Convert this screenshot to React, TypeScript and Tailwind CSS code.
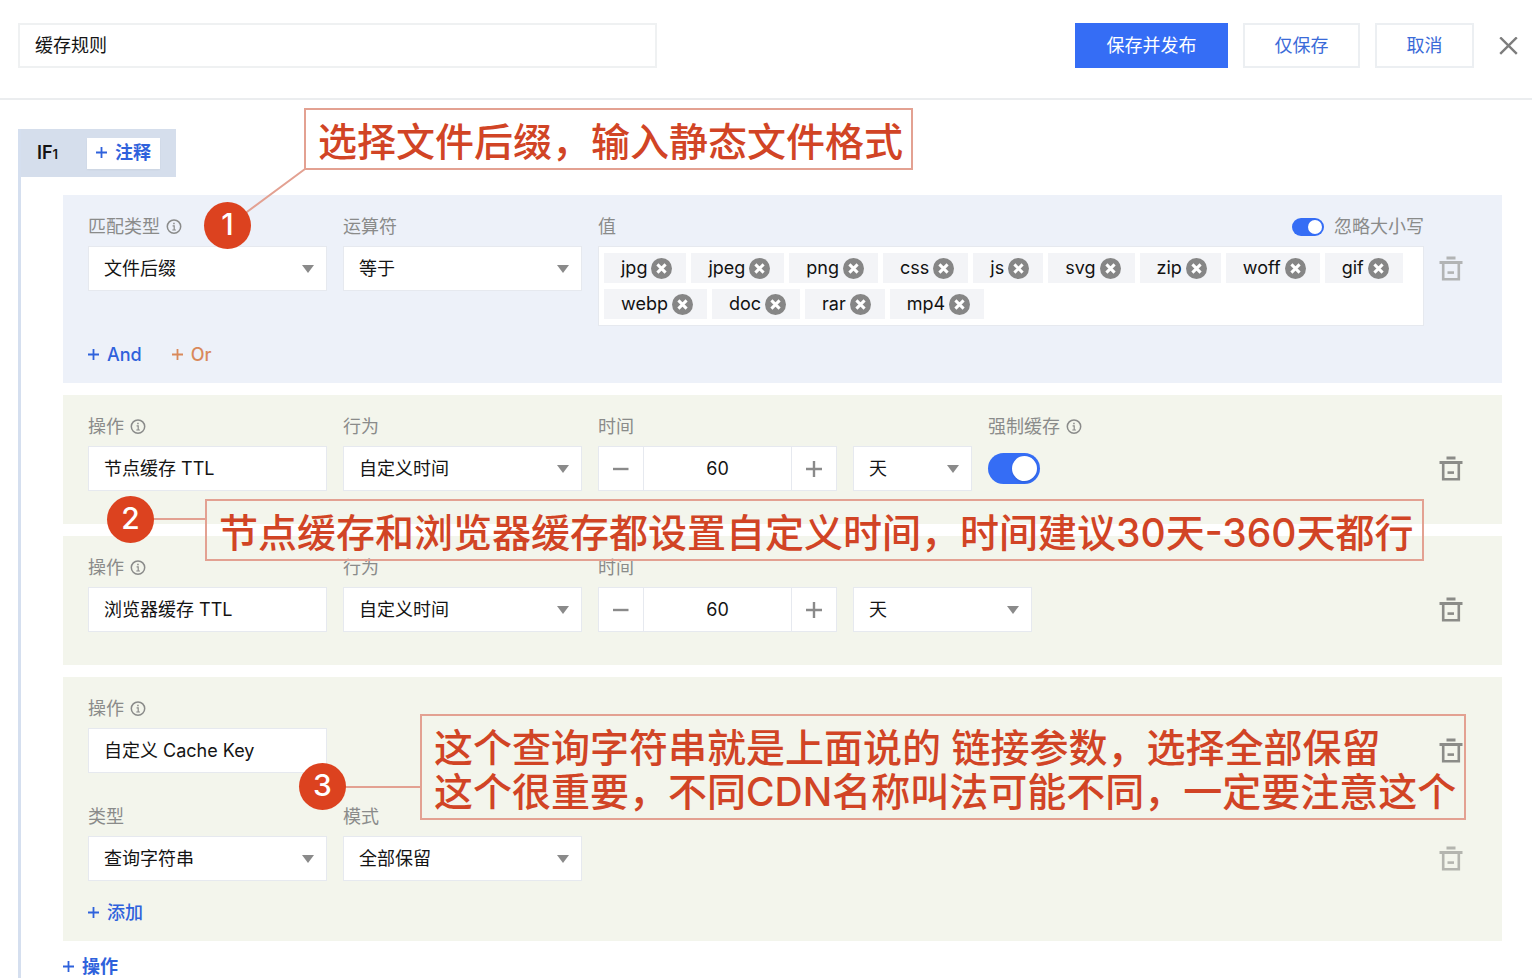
import React, { useId, useState } from "react";

const fieldBase =
  "h-[45px] w-full appearance-none rounded-none border border-[#e6e9ef] bg-white px-[15px] text-lg text-[#141414] outline-none";

function PlusIcon() {
  return (
    <svg width="12" height="12" viewBox="0 0 12 12" fill="none" stroke="currentColor" strokeWidth="1.8" aria-hidden="true">
      <path d="M5.5 0v11M0 5.5h11" />
    </svg>
  );
}

function InfoIcon() {
  return (
    <svg width="16" height="16" viewBox="0 0 16 16" fill="none" stroke="currentColor" strokeWidth="1.5" aria-hidden="true">
      <circle cx="8" cy="7.6" r="6.7" />
      <path d="M6.6 6.9H8.2V10.9M6.3 11h3.6" strokeWidth="1.2" />
      <path d="M7.2 4.5h1.5" strokeWidth="1.6" />
    </svg>
  );
}

function TrashIcon() {
  return (
    <svg width="24" height="25" viewBox="0 0 24 25" className="shrink-0" aria-hidden="true">
      <g fill="#8b8c88">
        <rect x="7.5" y="0.5" width="9" height="3" />
        <rect x="0.5" y="5" width="23" height="3" />
        <rect x="8.5" y="15.3" width="6.5" height="2.6" />
      </g>
      <path d="M4.2 7v16.2h15.6V7" fill="none" stroke="#8b8c88" strokeWidth="2.6" />
    </svg>
  );
}

function DeleteButton({ dim = false }: { dim?: boolean }) {
  return (
    <button
      type="button"
      aria-label="删除"
      className={`ml-auto flex h-[45px] w-[22px] shrink-0 items-center justify-center ${dim ? "opacity-60" : ""}`}
    >
      <TrashIcon />
    </button>
  );
}

function Label({ text, info, htmlFor }: { text: string; info?: boolean; htmlFor?: string }) {
  return (
    <div className="mb-[3px] flex h-8 items-center gap-1.5 text-[#8a8b8a]">
      <label htmlFor={htmlFor}>{text}</label>
      {info && <InfoIcon />}
    </div>
  );
}

function SelectBox({ id, value, label }: { id?: string; value: string; label?: string }) {
  return (
    <div className="relative">
      <select id={id} aria-label={label} className={fieldBase} defaultValue={value}>
        <option>{value}</option>
      </select>
      <svg width="12" height="8" viewBox="0 0 12 8" className="pointer-events-none absolute top-[19px] right-[13px]" aria-hidden="true">
        <path d="M0 0h12L6 8z" fill="#8a8a8a" />
      </svg>
    </div>
  );
}

function SelectField({ label, value, info }: { label: string; value: string; info?: boolean }) {
  const id = useId();
  return (
    <div className="w-[239px]">
      <Label text={label} info={info} htmlFor={id} />
      <SelectBox id={id} value={value} />
    </div>
  );
}

function TextField({ label, value }: { label: string; value: string }) {
  const id = useId();
  return (
    <div className="w-[239px]">
      <Label text={label} info htmlFor={id} />
      <input id={id} type="text" defaultValue={value} className={`${fieldBase} pb-[3px]`} />
    </div>
  );
}

function NumberField({ label, initial }: { label: string; initial: number }) {
  const id = useId();
  const [value, setValue] = useState(initial);
  return (
    <div className="w-[239px]">
      <Label text={label} htmlFor={id} />
      <div className="flex h-[45px] border border-[#e6e9ef] bg-white text-[#8a8a8a]">
        <button type="button" aria-label="减少" onClick={() => setValue(value - 1)} className="flex w-11 items-center justify-center">
          <svg width="16" height="16" viewBox="0 0 16 16" stroke="currentColor" strokeWidth="2.4" aria-hidden="true">
            <path d="M0 8h15.5" />
          </svg>
        </button>
        <input
          id={id}
          type="text"
          inputMode="numeric"
          value={value}
          onChange={(e) => setValue(Number(e.target.value) || 0)}
          className="min-w-0 flex-1 border-x border-[#e6e9ef] text-center text-lg text-[#141414] outline-none"
        />
        <button type="button" aria-label="增加" onClick={() => setValue(value + 1)} className="flex w-11 items-center justify-center">
          <svg width="16" height="16" viewBox="0 0 16 16" stroke="currentColor" strokeWidth="2.4" aria-hidden="true">
            <path d="M0 8h16M8 0v16" />
          </svg>
        </button>
      </div>
    </div>
  );
}

function LinkButton({ text, orange = false, strong = false }: { text: string; orange?: boolean; strong?: boolean }) {
  return (
    <button
      type="button"
      className={`flex h-6 items-center gap-[7px] ${strong ? "font-semibold" : "font-medium"} ${orange ? "text-[#d9895b]" : "text-[#2f62dc]"}`}
    >
      <PlusIcon />
      {text}
    </button>
  );
}

function Tag({ text, onRemove }: { text: string; onRemove: () => void }) {
  return (
    <li className="flex h-[30px] items-center gap-1 bg-[#f3f4f7] pr-3.5 pl-[17px] text-[#111]">
      {text}
      <button type="button" aria-label={`移除 ${text}`} onClick={onRemove}>
        <svg width="21" height="21" viewBox="0 0 21 21" aria-hidden="true">
          <circle cx="10.5" cy="10.5" r="10.5" fill="#868686" />
          <path d="M6.4 6.4l8.2 8.2M14.6 6.4l-8.2 8.2" stroke="#fff" strokeWidth="3" />
        </svg>
      </button>
    </li>
  );
}

const suffixes = ["jpg", "jpeg", "png", "css", "js", "svg", "zip", "woff", "gif", "webp", "doc", "rar", "mp4"];

function MatchPanel() {
  const [tags, setTags] = useState(suffixes);
  return (
    <section className="bg-[#edf1f9] pt-4 pr-10 pb-4 pl-[25px]">
      <div className="flex gap-4">
        <SelectField label="匹配类型" value="文件后缀" info />
        <SelectField label="运算符" value="等于" />
        <div className="min-w-0 flex-1">
          <div className="mb-[3px] flex h-8 items-center justify-between text-[#8a8b8a]">
            <span>值</span>
            <label className="flex items-center gap-2.5">
              <input
                type="checkbox"
                role="switch"
                defaultChecked
                className="flex h-[18px] w-8 appearance-none items-center justify-end rounded-full bg-[#356df5] px-0.5 before:size-3.5 before:rounded-full before:bg-white before:content-['']"
              />
              忽略大小写
            </label>
          </div>
          <ul className="flex min-h-20 flex-wrap content-start gap-x-[5px] gap-y-1.5 border border-[#e6e9ef] bg-white px-[5px] pt-1.5 pb-1.5">
            {tags.map((t) => (
              <Tag key={t} text={t} onRemove={() => setTags(tags.filter((x) => x !== t))} />
            ))}
          </ul>
        </div>
        <div className="pt-[35px]">
          <DeleteButton dim />
        </div>
      </div>
      <div className="mt-[17px] flex gap-[30px]">
        <LinkButton text="And" />
        <LinkButton text="Or" orange />
      </div>
    </section>
  );
}

function TtlPanel({ action, force = false }: { action: string; force?: boolean }) {
  const id = useId();
  return (
    <section className="flex items-end gap-4 bg-[#f3f5ec] pt-4 pr-10 pb-[33px] pl-[25px]">
      <TextField label="操作" value={action} />
      <SelectField label="行为" value="自定义时间" />
      <NumberField label="时间" initial={60} />
      <div className={force ? "w-[119px]" : "w-[179px]"}>
        <SelectBox value="天" label="时间单位" />
      </div>
      {force && (
        <div>
          <Label text="强制缓存" info htmlFor={id} />
          <div className="flex h-[45px] items-center">
            <input
              id={id}
              type="checkbox"
              role="switch"
              defaultChecked
              className="flex h-[31px] w-[52px] appearance-none items-center justify-end rounded-full bg-[#356df5] p-[3px] before:size-[25px] before:rounded-full before:bg-white before:shadow before:content-['']"
            />
          </div>
        </div>
      )}
      <DeleteButton />
    </section>
  );
}

function CacheKeyPanel() {
  return (
    <section className="bg-[#f3f5ec] pt-4 pr-10 pb-4 pl-[25px]">
      <div className="flex items-end">
        <TextField label="操作" value="自定义 Cache Key" />
        <DeleteButton />
      </div>
      <div className="mt-7 flex items-end gap-4">
        <SelectField label="类型" value="查询字符串" />
        <SelectField label="模式" value="全部保留" />
        <DeleteButton dim />
      </div>
      <div className="mt-5">
        <LinkButton text="添加" />
      </div>
    </section>
  );
}

const calloutBox =
  "absolute flex items-center border-2 border-[#e3a192] pt-[5px] pl-3 whitespace-nowrap text-[39px] leading-[44px] font-medium text-[#d14425]";
const badge =
  "absolute flex size-[47px] items-center justify-center rounded-full bg-[#dc421f] pb-1 text-3xl font-medium text-white";

function Annotations() {
  return (
    <div className="pointer-events-none absolute inset-0">
      <svg className="absolute inset-0 size-full" stroke="#e3a192" strokeWidth="2" aria-hidden="true">
        <path d="M228 226L305 169M130 519H206M323 787H421" fill="none" />
      </svg>
      <p className={`${calloutBox} top-[108px] left-[304px] h-[62px] w-[609px]`}>
        选择文件后缀，输入静态文件格式
      </p>
      <p className={`${calloutBox} top-[499px] left-[205px] h-[62px] w-[1219px]`}>
        节点缓存和浏览器缓存都设置自定义时间，时间建议30天-360天都行
      </p>
      <p className={`${calloutBox} top-[714px] left-[420px] h-[106px] w-[1046px]`}>
        这个查询字符串就是上面说的 链接参数，选择全部保留
        <br />
        这个很重要，不同CDN名称叫法可能不同，一定要注意这个
      </p>
      <span className={`${badge} top-[202px] left-[204px]`}>1</span>
      <span className={`${badge} top-[496px] left-[107px]`}>2</span>
      <span className={`${badge} top-[763px] left-[299px]`}>3</span>
    </div>
  );
}

export default function App() {
  return (
    <div className="relative flex min-h-screen flex-col bg-white font-['Inter','Noto_Sans_CJK_SC',sans-serif] text-lg leading-6 text-[#141414]">
      <header className="flex items-center gap-[15px] border-b-2 border-[#ebedef] pt-[23px] pr-[14px] pb-[30px] pl-[18px]">
        <input
          type="text"
          aria-label="规则名称"
          defaultValue="缓存规则"
          className="h-[45px] w-[639px] border-2 border-[#eff1f2] px-[15px] pb-[3px] text-lg outline-none"
        />
        <button type="button" className="ml-auto h-[45px] w-[153px] bg-[#356df5] text-white">
          保存并发布
        </button>
        <button type="button" className="h-[45px] w-[117px] border-2 border-[#eceff2] text-[#3a6ad8]">
          仅保存
        </button>
        <button type="button" className="h-[45px] w-[99px] border-2 border-[#eceff2] text-[#3a6ad8]">
          取消
        </button>
        <button type="button" aria-label="关闭" className="ml-[10px] flex items-center">
          <svg width="19" height="18" viewBox="0 0 19 18" stroke="#7d7d7d" strokeWidth="2.4" aria-hidden="true">
            <path d="M1.2 0.4l16.6 16.4M17.8 0.4L1.2 16.8" />
          </svg>
        </button>
      </header>
      <main className="mt-[29px] ml-[18px] flex-1 border-l-[3px] border-[#d5dfef] pr-[30px]">
        <div className="flex h-12 w-[155px] items-center justify-between bg-[#d5deec] pr-4 pl-4">
          <span className="font-semibold">
            IF<span className="text-[13px]">1</span>
          </span>
          <button type="button" className="flex h-[31px] items-center gap-[7px] bg-white px-[9px] font-semibold text-[#2f62dc] shadow-xs">
            <PlusIcon />
            注释
          </button>
        </div>
        <div className="mt-[18px] ml-[42px] flex flex-col gap-3">
          <MatchPanel />
          <TtlPanel action="节点缓存 TTL" force />
          <TtlPanel action="浏览器缓存 TTL" />
          <CacheKeyPanel />
          <div className="-mb-1 pt-0.5">
            <LinkButton text="操作" strong />
          </div>
        </div>
      </main>
      <Annotations />
    </div>
  );
}
